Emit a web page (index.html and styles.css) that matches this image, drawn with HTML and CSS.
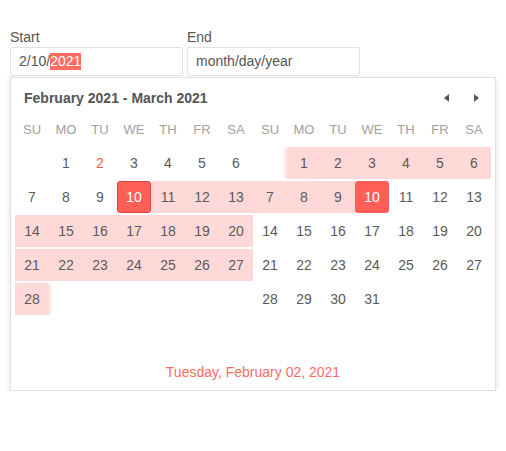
FILE: index.html
```html
<!DOCTYPE html>
<html lang="en">
<head>
    <meta charset="UTF-8">
    <title>Date Range Picker</title>
    <link rel="stylesheet" href="styles.css">
</head>
<body>

    <div class="range-picker">
        <div class="fields">
            <div class="field">
                <label>Start</label>
                <div class="input">2/10/<span class="sel">2021</span></div>
            </div>
            <div class="field">
                <label>End</label>
                <div class="input">month/day/year</div>
            </div>
        </div>

        <div class="popup">
            <div class="popup-header">
                <span class="title">February 2021 - March 2021</span>
                <span class="nav">
                    <span class="arrow prev"></span>
                    <span class="arrow next"></span>
                </span>
            </div>

            <div class="months">
                <div class="month">
                    <div class="dow">SU</div><div class="dow">MO</div><div class="dow">TU</div><div class="dow">WE</div><div class="dow">TH</div><div class="dow">FR</div><div class="dow">SA</div>

                    <div class="day"></div><div class="day">1</div><div class="day today">2</div><div class="day">3</div><div class="day">4</div><div class="day">5</div><div class="day">6</div>
                    <div class="day">7</div><div class="day">8</div><div class="day">9</div><div class="day selected bordered">10</div><div class="day range">11</div><div class="day range">12</div><div class="day range">13</div>
                    <div class="day range">14</div><div class="day range">15</div><div class="day range">16</div><div class="day range">17</div><div class="day range">18</div><div class="day range">19</div><div class="day range">20</div>
                    <div class="day range">21</div><div class="day range">22</div><div class="day range">23</div><div class="day range">24</div><div class="day range">25</div><div class="day range">26</div><div class="day range">27</div>
                    <div class="day range range-end">28</div><div class="day"></div><div class="day"></div><div class="day"></div><div class="day"></div><div class="day"></div><div class="day"></div>
                    <div class="day"></div>
                </div>

                <div class="month">
                    <div class="dow">SU</div><div class="dow">MO</div><div class="dow">TU</div><div class="dow">WE</div><div class="dow">TH</div><div class="dow">FR</div><div class="dow">SA</div>

                    <div class="day"></div><div class="day range range-start">1</div><div class="day range">2</div><div class="day range">3</div><div class="day range">4</div><div class="day range">5</div><div class="day range">6</div>
                    <div class="day range">7</div><div class="day range">8</div><div class="day range">9</div><div class="day selected">10</div><div class="day">11</div><div class="day">12</div><div class="day">13</div>
                    <div class="day">14</div><div class="day">15</div><div class="day">16</div><div class="day">17</div><div class="day">18</div><div class="day">19</div><div class="day">20</div>
                    <div class="day">21</div><div class="day">22</div><div class="day">23</div><div class="day">24</div><div class="day">25</div><div class="day">26</div><div class="day">27</div>
                    <div class="day">28</div><div class="day">29</div><div class="day">30</div><div class="day">31</div><div class="day"></div><div class="day"></div><div class="day"></div>
                    <div class="day"></div>
                </div>
            </div>

            <div class="popup-footer">Tuesday, February 02, 2021</div>
        </div>
    </div>

</body>
</html>
```
FILE: styles.css
```css
body {
    margin: 0;
    font-family: "Liberation Sans", Arial, sans-serif;
    font-size: 14px;
    color: #555;
    background: #fff;
}
.range-picker {
    padding: 28px 10px 0;
}
.fields {
    display: flex;
    gap: 4px;
}
.field label {
    display: block;
    line-height: 18px;
    margin-bottom: 1px;
    color: #555;
}
.input {
    box-sizing: border-box;
    width: 173px;
    height: 29px;
    padding: 0 8px;
    border: 1px solid #e2e2e2;
    border-radius: 2px;
    line-height: 27px;
    color: #555;
}
.input .sel {
    background: #ff6b63;
    color: #fff;
    display: inline-block;
    line-height: 17px;
}

/* Popup */
.popup {
    box-sizing: border-box;
    width: 486px;
    margin-top: 1px;
    padding: 0 4px;
    border: 1px solid #e0e0e0;
    box-shadow: 0 2px 6px rgba(0,0,0,0.12);
    background: #fff;
}
.popup-header {
    display: flex;
    justify-content: space-between;
    align-items: center;
    padding: 10px 0 6px 9px;
    line-height: 20px;
}
.title {
    font-weight: bold;
    color: #555;
}
.nav {
    display: flex;
    gap: 25px;
    padding-right: 12px;
}
.arrow {
    width: 0;
    height: 0;
    border-top: 4px solid transparent;
    border-bottom: 4px solid transparent;
}
.arrow.prev { border-right: 5px solid #555; }
.arrow.next { border-left: 5px solid #555; }

.months {
    display: flex;
}
.month {
    display: grid;
    grid-template-columns: repeat(7, 34px);
    grid-template-rows: 32px;
    grid-auto-rows: 34px;
}
.dow {
    font-size: 13px;
    color: #a0a0a0;
    text-align: center;
    line-height: 32px;
    height: 32px;
}
.day {
    height: 32px;
    margin: 1px 0;
    line-height: 32px;
    text-align: center;
    color: #5a5a5a;
}
.day.today { color: #f25c54; }
.day.range { background: #ffd9d7; }
.day.range-start { box-shadow: -4px 0 3px -1px #ffe4e2; }
.day.range-end { box-shadow: 3px 0 3px -1px #ffe4e2; }
.day.selected {
    background: #ff5f57;
    color: #fff;
    border-radius: 3px;
}
.day.bordered {
    box-sizing: border-box;
    border: 1px solid #d8463f;
    line-height: 30px;
}

.popup-footer {
    text-align: center;
    color: #ff6b63;
    line-height: 20px;
    padding: 12px 0 8px;
}
```
